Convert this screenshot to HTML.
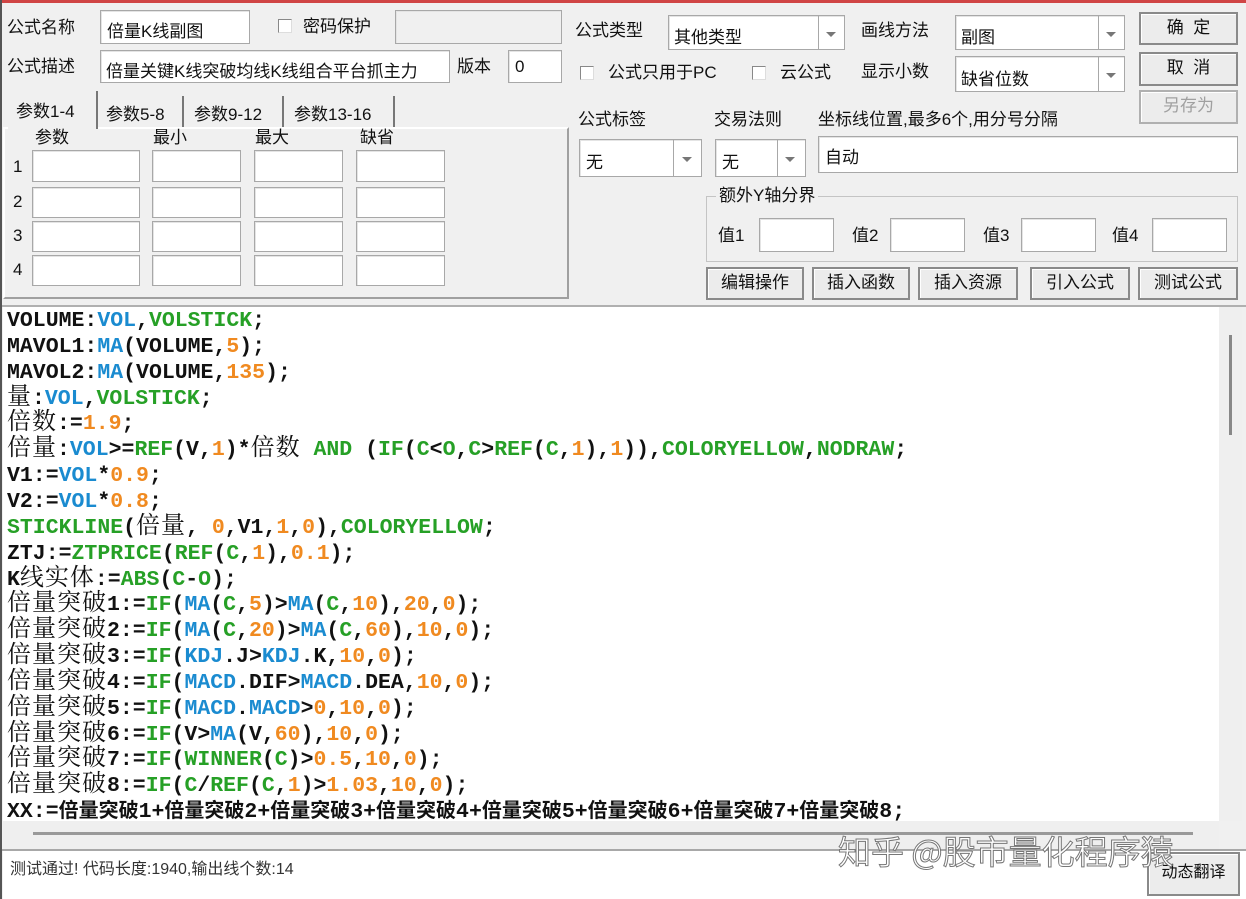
<!DOCTYPE html>
<html><head><meta charset="utf-8">
<style>
*{box-sizing:border-box;margin:0;padding:0}
body{width:1246px;height:899px;background:#f0f0f0;position:relative;overflow:hidden;font-family:"Liberation Sans","Noto Sans CJK SC",sans-serif;font-size:17px;color:#111}
.a{position:absolute;white-space:nowrap}
.in{position:absolute;background:#fff;border:1px solid #a8a8a8;box-shadow:inset 1px 1px 0 #e4e4e4}
.lbl{position:absolute;white-space:nowrap;line-height:20px}
.cb{position:absolute;width:14px;height:14px;background:#fff;border:1px solid #888;border-right-color:#ddd;border-bottom-color:#ddd}
.sep{position:absolute;top:0;bottom:0;width:1px;background:#a8a8a8}
.arr{position:absolute;width:0;height:0;border-left:5px solid transparent;border-right:5px solid transparent;border-top:5px solid #777}
.btn{position:absolute;background:#ececec;border:2px solid #8a8a8a;box-shadow:inset 1px 1px 0 #fff;text-align:center;line-height:28px;font-size:17px}
.code{position:absolute;left:4px;top:1px;font-family:"Liberation Mono",monospace;font-weight:bold;font-size:21.5px;color:#111}
.code div{position:absolute;left:0;height:26px;line-height:26px;white-space:nowrap}
.b{color:#1a8bd0}.g{color:#26a026}.o{color:#f08a20}
.c{font-family:"Noto Serif CJK SC","Noto Sans CJK SC",serif;font-weight:normal;font-size:24px;letter-spacing:1px;line-height:10px}
.x{font-family:"Noto Sans CJK SC",sans-serif;font-size:20px;line-height:10px}
</style></head><body>
<div class="a" style="left:0;top:0;width:1246px;height:3px;background:#d04545"></div>
<div class="a" style="left:0;top:0;width:2px;height:899px;background:#555"></div>

<div class="lbl" style="left:7px;top:18px">公式名称</div>
<div class="in" style="left:100px;top:10px;width:150px;height:34px"><span class="a" style="left:6px;top:6px">倍量K线副图</span></div>
<div class="cb" style="left:278px;top:19px"></div>
<div class="lbl" style="left:303px;top:17px">密码保护</div>
<div class="in" style="left:395px;top:10px;width:167px;height:34px;background:#f0f0f0"></div>

<div class="lbl" style="left:7px;top:57px">公式描述</div>
<div class="in" style="left:100px;top:50px;width:350px;height:33px;overflow:hidden"><span class="a" style="left:5px;top:6px">倍量关键K线突破均线K线组合平台抓主力</span></div>
<div class="lbl" style="left:457px;top:57px">版本</div>
<div class="in" style="left:508px;top:50px;width:54px;height:33px"><span class="a" style="left:6px;top:6px">0</span></div>

<div class="a" style="left:3px;top:127px;width:566px;height:172px;border:2px solid #c8c8c8;border-top-color:#fff;border-left-color:#fff;border-right-color:#a0a0a0;border-bottom-color:#a0a0a0"></div>
<div class="a" style="left:8px;top:91px;width:90px;height:38px;background:#f0f0f0;border-right:2px solid #777;padding:6px 0 0 8px">参数1-4</div>
<div class="a" style="left:100px;top:96px;width:84px;height:31px;border-right:2px solid #777;padding:4px 0 0 6px">参数5-8</div>
<div class="a" style="left:186px;top:96px;width:98px;height:31px;border-right:2px solid #777;padding:4px 0 0 8px">参数9-12</div>
<div class="a" style="left:286px;top:96px;width:109px;height:31px;border-right:2px solid #777;padding:4px 0 0 8px">参数13-16</div>

<div class="lbl" style="left:35px;top:128px">参数</div>
<div class="lbl" style="left:153px;top:128px">最小</div>
<div class="lbl" style="left:255px;top:128px">最大</div>
<div class="lbl" style="left:360px;top:128px">缺省</div>
<div class="lbl" style="left:13px;top:157px">1</div>
<div class="lbl" style="left:13px;top:192px">2</div>
<div class="lbl" style="left:13px;top:226px">3</div>
<div class="lbl" style="left:13px;top:260px">4</div>
<div class="in" style="left:32px;top:150px;width:108px;height:32px"></div><div class="in" style="left:152px;top:150px;width:89px;height:32px"></div><div class="in" style="left:254px;top:150px;width:89px;height:32px"></div><div class="in" style="left:356px;top:150px;width:89px;height:32px"></div>
<div class="in" style="left:32px;top:187px;width:108px;height:31px"></div><div class="in" style="left:152px;top:187px;width:89px;height:31px"></div><div class="in" style="left:254px;top:187px;width:89px;height:31px"></div><div class="in" style="left:356px;top:187px;width:89px;height:31px"></div>
<div class="in" style="left:32px;top:221px;width:108px;height:31px"></div><div class="in" style="left:152px;top:221px;width:89px;height:31px"></div><div class="in" style="left:254px;top:221px;width:89px;height:31px"></div><div class="in" style="left:356px;top:221px;width:89px;height:31px"></div>
<div class="in" style="left:32px;top:255px;width:108px;height:31px"></div><div class="in" style="left:152px;top:255px;width:89px;height:31px"></div><div class="in" style="left:254px;top:255px;width:89px;height:31px"></div><div class="in" style="left:356px;top:255px;width:89px;height:31px"></div>

<div class="lbl" style="left:575px;top:21px">公式类型</div>
<div class="in" style="left:668px;top:15px;width:177px;height:35px"><span class="a" style="left:5px;top:7px">其他类型</span><div class="sep" style="left:149px"></div><div class="arr" style="left:157px;top:16px"></div></div>
<div class="lbl" style="left:861px;top:21px">画线方法</div>
<div class="in" style="left:955px;top:15px;width:170px;height:35px"><span class="a" style="left:5px;top:7px">副图</span><div class="sep" style="left:142px"></div><div class="arr" style="left:150px;top:16px"></div></div>
<div class="btn" style="left:1139px;top:12px;width:99px;height:33px">确&nbsp;&nbsp;定</div>
<div class="btn" style="left:1139px;top:52px;width:99px;height:34px">取&nbsp;&nbsp;消</div>
<div class="btn" style="left:1139px;top:90px;width:99px;height:34px;color:#a0a0a0;border-color:#b0b0b0">另存为</div>

<div class="cb" style="left:580px;top:66px"></div>
<div class="lbl" style="left:608px;top:63px">公式只用于PC</div>
<div class="cb" style="left:752px;top:66px"></div>
<div class="lbl" style="left:780px;top:63px">云公式</div>
<div class="lbl" style="left:861px;top:62px">显示小数</div>
<div class="in" style="left:955px;top:56px;width:170px;height:36px"><span class="a" style="left:5px;top:8px">缺省位数</span><div class="sep" style="left:142px"></div><div class="arr" style="left:150px;top:16px"></div></div>

<div class="lbl" style="left:578px;top:110px">公式标签</div>
<div class="lbl" style="left:714px;top:110px">交易法则</div>
<div class="lbl" style="left:818px;top:110px">坐标线位置,最多6个,用分号分隔</div>
<div class="in" style="left:579px;top:139px;width:123px;height:38px"><span class="a" style="left:6px;top:8px">无</span><div class="sep" style="left:93px"></div><div class="arr" style="left:102px;top:17px"></div></div>
<div class="in" style="left:715px;top:139px;width:91px;height:38px"><span class="a" style="left:6px;top:8px">无</span><div class="sep" style="left:61px"></div><div class="arr" style="left:69px;top:17px"></div></div>
<div class="in" style="left:818px;top:136px;width:420px;height:37px"><span class="a" style="left:6px;top:6px">自动</span></div>

<div class="a" style="left:706px;top:196px;width:532px;height:66px;border:1px solid #c4c4c4"></div>
<div class="lbl" style="left:716px;top:186px;background:#f0f0f0;padding:0 3px">额外Y轴分界</div>
<div class="lbl" style="left:718px;top:226px">值1</div><div class="in" style="left:759px;top:218px;width:75px;height:34px"></div>
<div class="lbl" style="left:852px;top:226px">值2</div><div class="in" style="left:890px;top:218px;width:75px;height:34px"></div>
<div class="lbl" style="left:983px;top:226px">值3</div><div class="in" style="left:1021px;top:218px;width:75px;height:34px"></div>
<div class="lbl" style="left:1112px;top:226px">值4</div><div class="in" style="left:1152px;top:218px;width:75px;height:34px"></div>

<div class="btn" style="left:706px;top:267px;width:98px;height:33px">编辑操作</div>
<div class="btn" style="left:812px;top:267px;width:98px;height:33px">插入函数</div>
<div class="btn" style="left:918px;top:267px;width:100px;height:33px">插入资源</div>
<div class="btn" style="left:1030px;top:267px;width:100px;height:33px">引入公式</div>
<div class="btn" style="left:1138px;top:267px;width:100px;height:33px">测试公式</div>

<div class="a" style="left:2px;top:305px;width:1244px;height:2px;background:#b0b0b0"></div>
<div class="a" style="left:3px;top:307px;width:1216px;height:514px;background:#fff;overflow:hidden">
<div class="code">
<div style="top:0px">VOLUME:<span class="b">VOL</span>,<span class="g">VOLSTICK</span>;</div>
<div style="top:25.85px">MAVOL1:<span class="b">MA</span>(VOLUME,<span class="o">5</span>);</div>
<div style="top:51.7px">MAVOL2:<span class="b">MA</span>(VOLUME,<span class="o">135</span>);</div>
<div style="top:77.55px"><span class="c">量</span>:<span class="b">VOL</span>,<span class="g">VOLSTICK</span>;</div>
<div style="top:103.4px"><span class="c">倍数</span>:=<span class="o">1.9</span>;</div>
<div style="top:129.25px"><span class="c">倍量</span>:<span class="b">VOL</span>&gt;=<span class="g">REF</span>(V,<span class="o">1</span>)*<span class="c">倍数</span> <span class="g">AND</span> (<span class="g">IF</span>(<span class="g">C</span>&lt;<span class="g">O</span>,<span class="g">C</span>&gt;<span class="g">REF</span>(<span class="g">C</span>,<span class="o">1</span>),<span class="o">1</span>)),<span class="g">COLORYELLOW</span>,<span class="g">NODRAW</span>;</div>
<div style="top:155.1px">V1:=<span class="b">VOL</span>*<span class="o">0.9</span>;</div>
<div style="top:180.95px">V2:=<span class="b">VOL</span>*<span class="o">0.8</span>;</div>
<div style="top:206.8px"><span class="g">STICKLINE</span>(<span class="c">倍量</span>, <span class="o">0</span>,V1,<span class="o">1</span>,<span class="o">0</span>),<span class="g">COLORYELLOW</span>;</div>
<div style="top:232.65px">ZTJ:=<span class="g">ZTPRICE</span>(<span class="g">REF</span>(<span class="g">C</span>,<span class="o">1</span>),<span class="o">0.1</span>);</div>
<div style="top:258.5px">K<span class="c">线实体</span>:=<span class="g">ABS</span>(<span class="g">C</span>-<span class="g">O</span>);</div>
<div style="top:284.35px"><span class="c">倍量突破</span>1:=<span class="g">IF</span>(<span class="b">MA</span>(<span class="g">C</span>,<span class="o">5</span>)&gt;<span class="b">MA</span>(<span class="g">C</span>,<span class="o">10</span>),<span class="o">20</span>,<span class="o">0</span>);</div>
<div style="top:310.2px"><span class="c">倍量突破</span>2:=<span class="g">IF</span>(<span class="b">MA</span>(<span class="g">C</span>,<span class="o">20</span>)&gt;<span class="b">MA</span>(<span class="g">C</span>,<span class="o">60</span>),<span class="o">10</span>,<span class="o">0</span>);</div>
<div style="top:336.05px"><span class="c">倍量突破</span>3:=<span class="g">IF</span>(<span class="b">KDJ</span>.J&gt;<span class="b">KDJ</span>.K,<span class="o">10</span>,<span class="o">0</span>);</div>
<div style="top:361.9px"><span class="c">倍量突破</span>4:=<span class="g">IF</span>(<span class="b">MACD</span>.DIF&gt;<span class="b">MACD</span>.DEA,<span class="o">10</span>,<span class="o">0</span>);</div>
<div style="top:387.75px"><span class="c">倍量突破</span>5:=<span class="g">IF</span>(<span class="b">MACD</span>.<span class="b">MACD</span>&gt;<span class="o">0</span>,<span class="o">10</span>,<span class="o">0</span>);</div>
<div style="top:413.6px"><span class="c">倍量突破</span>6:=<span class="g">IF</span>(V&gt;<span class="b">MA</span>(V,<span class="o">60</span>),<span class="o">10</span>,<span class="o">0</span>);</div>
<div style="top:439.45px"><span class="c">倍量突破</span>7:=<span class="g">IF</span>(<span class="g">WINNER</span>(<span class="g">C</span>)&gt;<span class="o">0.5</span>,<span class="o">10</span>,<span class="o">0</span>);</div>
<div style="top:465.3px"><span class="c">倍量突破</span>8:=<span class="g">IF</span>(<span class="g">C</span>/<span class="g">REF</span>(<span class="g">C</span>,<span class="o">1</span>)&gt;<span class="o">1.03</span>,<span class="o">10</span>,<span class="o">0</span>);</div>
<div style="top:491.15px">XX:=<span class="x">倍量突破</span>1+<span class="x">倍量突破</span>2+<span class="x">倍量突破</span>3+<span class="x">倍量突破</span>4+<span class="x">倍量突破</span>5+<span class="x">倍量突破</span>6+<span class="x">倍量突破</span>7+<span class="x">倍量突破</span>8;</div>
</div></div>
<div class="a" style="left:1219px;top:307px;width:23px;height:514px;background:#efefef"></div>
<div class="a" style="left:1229px;top:335px;width:3px;height:100px;background:#888"></div>
<div class="a" style="left:3px;top:821px;width:1216px;height:28px;background:#efefef"></div>
<div class="a" style="left:33px;top:832px;width:1160px;height:3px;background:#999"></div>
<div class="a" style="left:2px;top:849px;width:1244px;height:2px;background:#a8a8a8"></div>
<div class="a" style="left:3px;top:851px;width:1243px;height:48px;background:#fff"></div>
<div class="lbl" style="left:10px;top:860px;font-size:16px;color:#333">测试通过! 代码长度:1940,输出线个数:14</div>
<div class="btn" style="left:1147px;top:852px;width:93px;height:44px;line-height:38px;font-size:16px">动态翻译</div>
<div class="a" style="left:838px;top:826px;font-size:33px;color:#fff;-webkit-text-stroke:1px #777;font-family:'Noto Sans CJK SC',sans-serif">知乎 @股市量化程序猿</div>
</body></html>
